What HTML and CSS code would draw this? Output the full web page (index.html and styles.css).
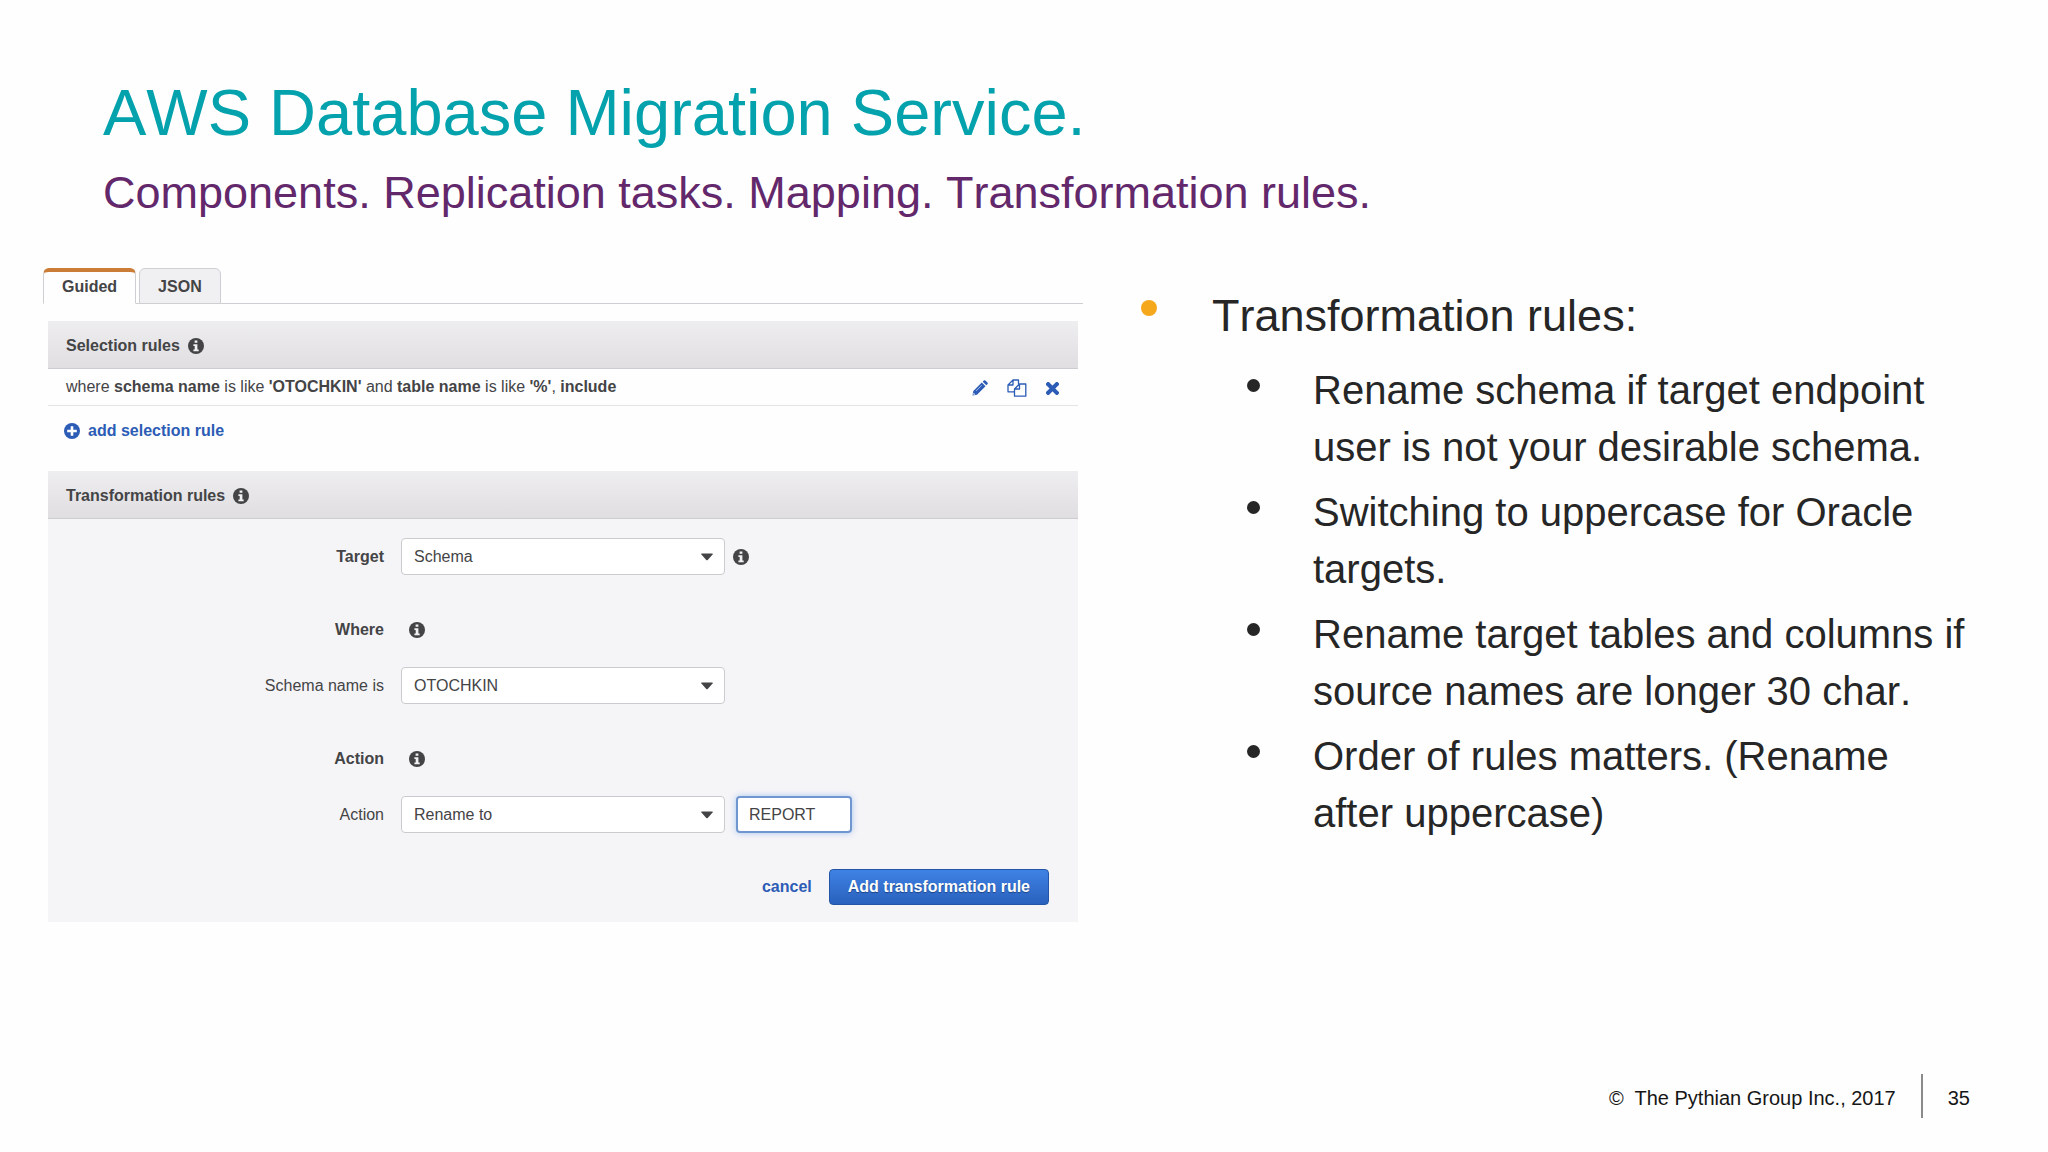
FILE: index.html
```html
<!DOCTYPE html>
<html lang="en">
<head>
<meta charset="utf-8">
<title>AWS Database Migration Service</title>
<link rel="stylesheet" href="styles.css">
</head>
<body>
<svg class="defs" aria-hidden="true">
  <symbol id="info" viewBox="0 0 16 16">
    <circle cx="8" cy="8" r="8" fill="currentColor"/>
    <path d="M6.600 2.400h2.800v2.400H6.600zM5.400 6.200h4v5.200h1.300v1.900H5.400v-1.900h1.300V8.100H5.400z" fill="#f1f0f3"/>
  </symbol>
  <symbol id="caret" viewBox="0 0 12 8">
    <path d="M.6.500h10.800q.6.300.2.900L6.700 7q-.7.700-1.400 0L.4 1.400Q0 .8.600.500z" fill="currentColor"/>
  </symbol>
</svg>
<div class="slide">
  <header class="heading">
    <h1 class="title">AWS Database Migration Service.</h1>
    <p class="subtitle">Components. Replication tasks. Mapping. Transformation rules.</p>
  </header>

  <main class="content">
    <section class="console">
      <div class="tabs">
        <button class="tab tab-active" type="button">Guided</button>
        <button class="tab" type="button">JSON</button>
      </div>

      <div class="rules">
        <h2 class="bar">Selection rules <svg class="icon"><use href="#info"/></svg></h2>
        <div class="rule">
          <p class="rule-text">where <b>schema name</b> is like <b>'OTOCHKIN'</b> and <b>table name</b> is like <b>'%'</b>, <b>include</b></p>
          <div class="rule-actions">
            <button class="icon-button" type="button" aria-label="Edit">
              <svg class="icon" viewBox="0 0 16 16"><path d="M.5 15.500 1.300 11 9.800 2.500l3.700 3.700L5 14.700zM10.700 1.700l1.100-1.100q.8-.7 1.600 0l2 2q.8.800 0 1.600l-1.100 1.100z" fill="currentColor"/><path d="M4 10.900 9.600 5.300" stroke="#a9c1ec"/><path d="m1.600 12.800 1.700 1.700-1.500.3-.5-.5z" fill="#fff"/></svg>
            </button>
            <button class="icon-button" type="button" aria-label="Copy">
              <svg class="icon-copy" viewBox="0 0 20 18" fill="none" stroke="currentColor" stroke-width="1.300" stroke-linejoin="round"><path d="M7.500 12.800H1V6L6 1h5.500v4.500M6 1v5H1"/><path d="M7.500 17.200V10L12.500 5h6.300v12.200zM12.500 5v5h-5"/></svg>
            </button>
            <button class="icon-button" type="button" aria-label="Delete">
              <svg class="icon-delete" viewBox="0 0 12 12"><path d="m2 2 8 8M10 2l-8 8" stroke="currentColor" stroke-width="3.800" stroke-linecap="square"/></svg>
            </button>
          </div>
        </div>
        <a class="add-link" href="#add"><svg class="icon" viewBox="0 0 16 16"><circle cx="8" cy="8" r="8" fill="currentColor"/><path d="M8 3.200v9.600M3.200 8h9.600" stroke="#fff" stroke-width="2.600"/></svg>add selection rule</a>

        <h2 class="bar">Transformation rules <svg class="icon"><use href="#info"/></svg></h2>
        <form class="form">
          <div class="field">
            <label class="label label-strong" for="target">Target</label>
            <div class="select-box"><select class="control" id="target"><option>Schema</option></select><svg class="caret"><use href="#caret"/></svg></div>
            <svg class="icon"><use href="#info"/></svg>
          </div>
          <div class="field field-head">
            <span class="label label-strong">Where</span>
            <svg class="icon icon-head"><use href="#info"/></svg>
          </div>
          <div class="field">
            <label class="label" for="schema">Schema name is</label>
            <div class="select-box"><select class="control" id="schema"><option>OTOCHKIN</option></select><svg class="caret"><use href="#caret"/></svg></div>
          </div>
          <div class="field field-head">
            <span class="label label-strong">Action</span>
            <svg class="icon icon-head"><use href="#info"/></svg>
          </div>
          <div class="field">
            <label class="label" for="action">Action</label>
            <div class="select-box"><select class="control" id="action"><option>Rename to</option></select><svg class="caret"><use href="#caret"/></svg></div>
            <input class="control control-focus" type="text" value="REPORT" aria-label="New name">
          </div>
          <div class="form-actions">
            <a class="cancel" href="#cancel">cancel</a>
            <button class="submit" type="button">Add transformation rule</button>
          </div>
        </form>
      </div>
    </section>

    <ul class="notes">
      <li class="note">
        <div>
          <p class="note-title">Transformation rules:</p>
          <ul class="points">
            <li class="point">Rename schema if target endpoint user is not your desirable schema.</li>
            <li class="point">Switching to uppercase for Oracle targets.</li>
            <li class="point">Rename target tables and columns if source names are longer 30 char.</li>
            <li class="point">Order of rules matters. (Rename after uppercase)</li>
          </ul>
        </div>
      </li>
    </ul>
  </main>

  <footer class="footer">
    <span class="copyright">©&nbsp; The Pythian Group Inc., 2017</span>
    <span class="page-number">35</span>
  </footer>
</div>
</body>
</html>
```
FILE: styles.css
```css
* {
  box-sizing: border-box;
}

body {
  margin: 0;
  background: #fefefe;
  color: #262626;
  font-family: "Liberation Sans", Arial, sans-serif;
}

h1, h2, p, ul {
  margin: 0;
  padding: 0;
}

ul {
  list-style: none;
}

button, select, input {
  margin: 0;
  font: inherit;
  color: inherit;
}

svg {
  display: block;
  flex: none;
}

.defs {
  display: none;
}

.slide {
  display: flex;
  flex-direction: column;
  min-height: 100vh;
  padding: 77px 78px 34px 43px;
}

.heading {
  display: flex;
  flex-direction: column;
  gap: 18px;
  padding-left: 60px;
  font-kerning: none;
}

.title {
  color: #04a2ad;
  font-size: 65px;
  font-weight: 400;
  line-height: 72px;
}

.subtitle {
  color: #63286b;
  font-size: 45px;
  line-height: 52px;
}

.content {
  display: grid;
  grid-template-columns: minmax(0, 1040fr) minmax(0, 829fr);
  gap: 58px;
  flex: 1;
  margin-top: 49px;
}

/* Console panel */

.console {
  color: #444446;
  font-size: 16px;
  line-height: 20px;
}

.tabs {
  display: flex;
  gap: 3px;
  height: 36px;
  border-bottom: 1px solid #cfced3;
}

.tab {
  height: 36px;
  padding: 2px 18px 0;
  border: 1px solid #cfced3;
  border-radius: 6px 6px 0 0;
  background: #f0f0f2;
  font-weight: 700;
}

.tab-active {
  padding: 0 18px 1px;
  border-top: 4px solid #cb7d38;
  border-bottom-color: #fefefe;
  background: #fefefe;
}

.rules {
  margin: 17px 5px 0;
}

.bar {
  display: flex;
  align-items: center;
  gap: 8px;
  height: 48px;
  padding: 2px 18px 0;
  border-bottom: 1px solid #cdccd0;
  background: linear-gradient(#eeedf0, #e0dee1);
  font-size: 16px;
  line-height: 20px;
}

.icon {
  width: 16px;
  height: 16px;
}

.rule {
  display: flex;
  align-items: center;
  justify-content: space-between;
  height: 37px;
  padding: 0 19px 0 18px;
  border-bottom: 1px solid #e5e5e8;
}

.rule-actions {
  display: flex;
  align-items: center;
  gap: 19px;
  padding-top: 2px;
  color: #2c5cb5;
}

.icon-button {
  padding: 0;
  border: 0;
  background: none;
}

.icon-copy {
  width: 20px;
  height: 18px;
}

.icon-delete {
  width: 13px;
  height: 13px;
}

.add-link {
  display: flex;
  align-items: center;
  gap: 8px;
  width: fit-content;
  margin: 15px 0 30px 16px;
  color: #2c5cb5;
  font-weight: 700;
  text-decoration: none;
}

.form {
  display: flex;
  flex-direction: column;
  padding: 19px 29px 17px 0;
  background: #f5f4f7;
}

.field {
  display: flex;
  align-items: center;
  gap: 8px;
}

.field-head {
  margin: 45px 0 27px;
}

.label {
  flex: none;
  width: 336px;
  margin-right: 9px;
  text-align: right;
}

.label-strong {
  font-weight: 700;
}

.icon-head {
  margin-left: 8px;
}

.select-box {
  display: grid;
  grid-template-columns: 1fr 24px;
  align-items: center;
  width: 324px;
}

.select-box .control {
  grid-area: 1 / 1 / 2 / 3;
  width: 100%;
}

.caret {
  grid-area: 1 / 2;
  width: 12px;
  height: 8px;
  pointer-events: none;
}

.control {
  height: 37px;
  padding: 0 12px;
  border: 1px solid #cbcace;
  border-radius: 4px;
  background: #fff;
  appearance: none;
}

.control-focus {
  width: 116px;
  margin-left: 3px;
  padding: 0 11px;
  border: 2px solid #7196cf;
  outline: 0;
  box-shadow: 0 0 6px #a5c6ee;
}

.form-actions {
  display: flex;
  align-items: center;
  justify-content: flex-end;
  gap: 17px;
  margin-top: 36px;
}

.cancel {
  color: #2c5cb5;
  font-weight: 700;
  text-decoration: none;
}

.submit {
  height: 36px;
  padding: 0 18px;
  border: 1px solid #2355a6;
  border-radius: 4px;
  background: linear-gradient(#3f82e4, #2961bd);
  color: #fff;
  font-weight: 700;
  text-shadow: 0 1px 1px #1d4384;
}

/* Bullet notes */

.notes {
  padding-top: 18px;
  font-kerning: none;
}

.note {
  display: grid;
  grid-template-columns: 71px 1fr;
}

.note::before {
  content: "";
  width: 16px;
  height: 16px;
  margin-top: 14px;
  border-radius: 50%;
  background: #f6a81c;
}

.note-title {
  font-size: 45px;
  line-height: 60px;
}

.points {
  display: grid;
  gap: 8px;
  margin-top: 16px;
  padding-left: 35px;
}

.point {
  display: grid;
  grid-template-columns: 66px 1fr;
  font-size: 40px;
  line-height: 57px;
}

.point::before {
  content: "";
  width: 13px;
  height: 13px;
  margin-top: 17px;
  border-radius: 50%;
  background: #262626;
}

/* Footer */

.footer {
  display: flex;
  justify-content: flex-end;
  color: #161616;
  font-size: 20px;
  line-height: 40px;
}

.copyright {
  margin-right: 25px;
  padding-top: 4px;
}

.page-number {
  padding: 4px 0 0 25px;
  border-left: 2px solid #8a8a8a;
}
```
